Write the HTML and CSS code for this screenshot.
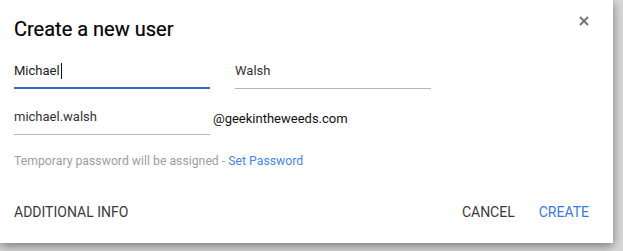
FILE: index.html
```html
<!DOCTYPE html>
<html>
<head>
<meta charset="utf-8">
<link rel="stylesheet" href="styles.css">
</head>
<body>
<div class="dialog">
  <div class="header">
    <h1 class="title">Create a new user</h1>
    <button class="close" aria-label="Close">
      <svg width="10" height="10" viewBox="0 0 10 10"><path d="M1 1L9 9M9 1L1 9" stroke="#757575" stroke-width="2" fill="none"/></svg>
    </button>
  </div>
  <div class="row names">
    <div class="field active"><span class="value">Michael</span><span class="caret"></span></div>
    <div class="field"><span class="value">Walsh</span></div>
  </div>
  <div class="row email">
    <div class="field"><span class="value">michael.walsh</span></div>
    <span class="domain">@geekintheweeds.com</span>
  </div>
  <p class="helper">Temporary password will be assigned - <a class="link" href="#">Set Password</a></p>
  <div class="footer">
    <button class="btn">ADDITIONAL INFO</button>
    <div class="actions">
      <button class="btn">CANCEL</button>
      <button class="btn primary">CREATE</button>
    </div>
  </div>
</div>
</body>
</html>
```

FILE: styles.css
```css
html, body {
  margin: 0;
  padding: 0;
  height: 100%;
  background: #d8d8d8;
  overflow: hidden;
}
body {
  font-family: Roboto, "Noto Sans", Arial, sans-serif;
}
.dialog {
  width: 613px;
  height: 243px;
  background: #fff;
  box-sizing: border-box;
  padding: 0 0 0 14px;
  box-shadow: 0 3px 10px rgba(0,0,0,0.45);
  display: flex;
  flex-direction: column;
}
.header {
  display: flex;
  align-items: flex-start;
  justify-content: space-between;
  padding-top: 17px;
  height: 46px;
  box-sizing: border-box;
}
.title {
  margin: 0;
  font-size: 20px;
  line-height: 24px;
  font-weight: 400;
  color: #000;
  -webkit-text-stroke: 0.2px #000;
}
.close {
  margin: -1px 24px 0 0;
  padding: 0;
  border: 0;
  background: none;
  width: 10px;
  height: 10px;
  display: flex;
}
.row {
  display: flex;
  align-items: flex-end;
}
.names {
  gap: 25px;
  height: 43px;
}
.field {
  width: 196px;
  height: 30px;
  box-sizing: border-box;
  border-bottom: 1px solid #b5b5b5;
  font-size: 13px;
  line-height: 16px;
  color: #333;
  display: flex;
  align-items: flex-start;
  padding-top: 4px;
}
.field.active {
  border-bottom: 2px solid #3367d6;
  color: #222;
}
.caret {
  display: inline-block;
  width: 1px;
  height: 16px;
  background: #111;
  margin-left: 1px;
}
.email {
  margin-top: 16px;
  align-items: flex-start;
}
.domain {
  margin-left: 3px;
  font-size: 13px;
  line-height: 16px;
  padding-top: 6px;
  color: #111;
}
.helper {
  margin: 18px 0 0;
  font-size: 12.25px;
  line-height: 16px;
  color: #9e9e9e;
}
.link {
  color: #4a86f0;
  text-decoration: none;
}
.footer {
  margin-top: 35px;
  display: flex;
  justify-content: space-between;
  align-items: center;
  padding-right: 24px;
}
.actions {
  display: flex;
  gap: 24px;
}
.btn {
  padding: 0;
  border: 0;
  background: none;
  font-family: Roboto, "Noto Sans", Arial, sans-serif;
  font-size: 14px;
  line-height: 16px;
  color: #3a3a3a;
}
.btn.primary {
  color: #3b78e7;
}
```
